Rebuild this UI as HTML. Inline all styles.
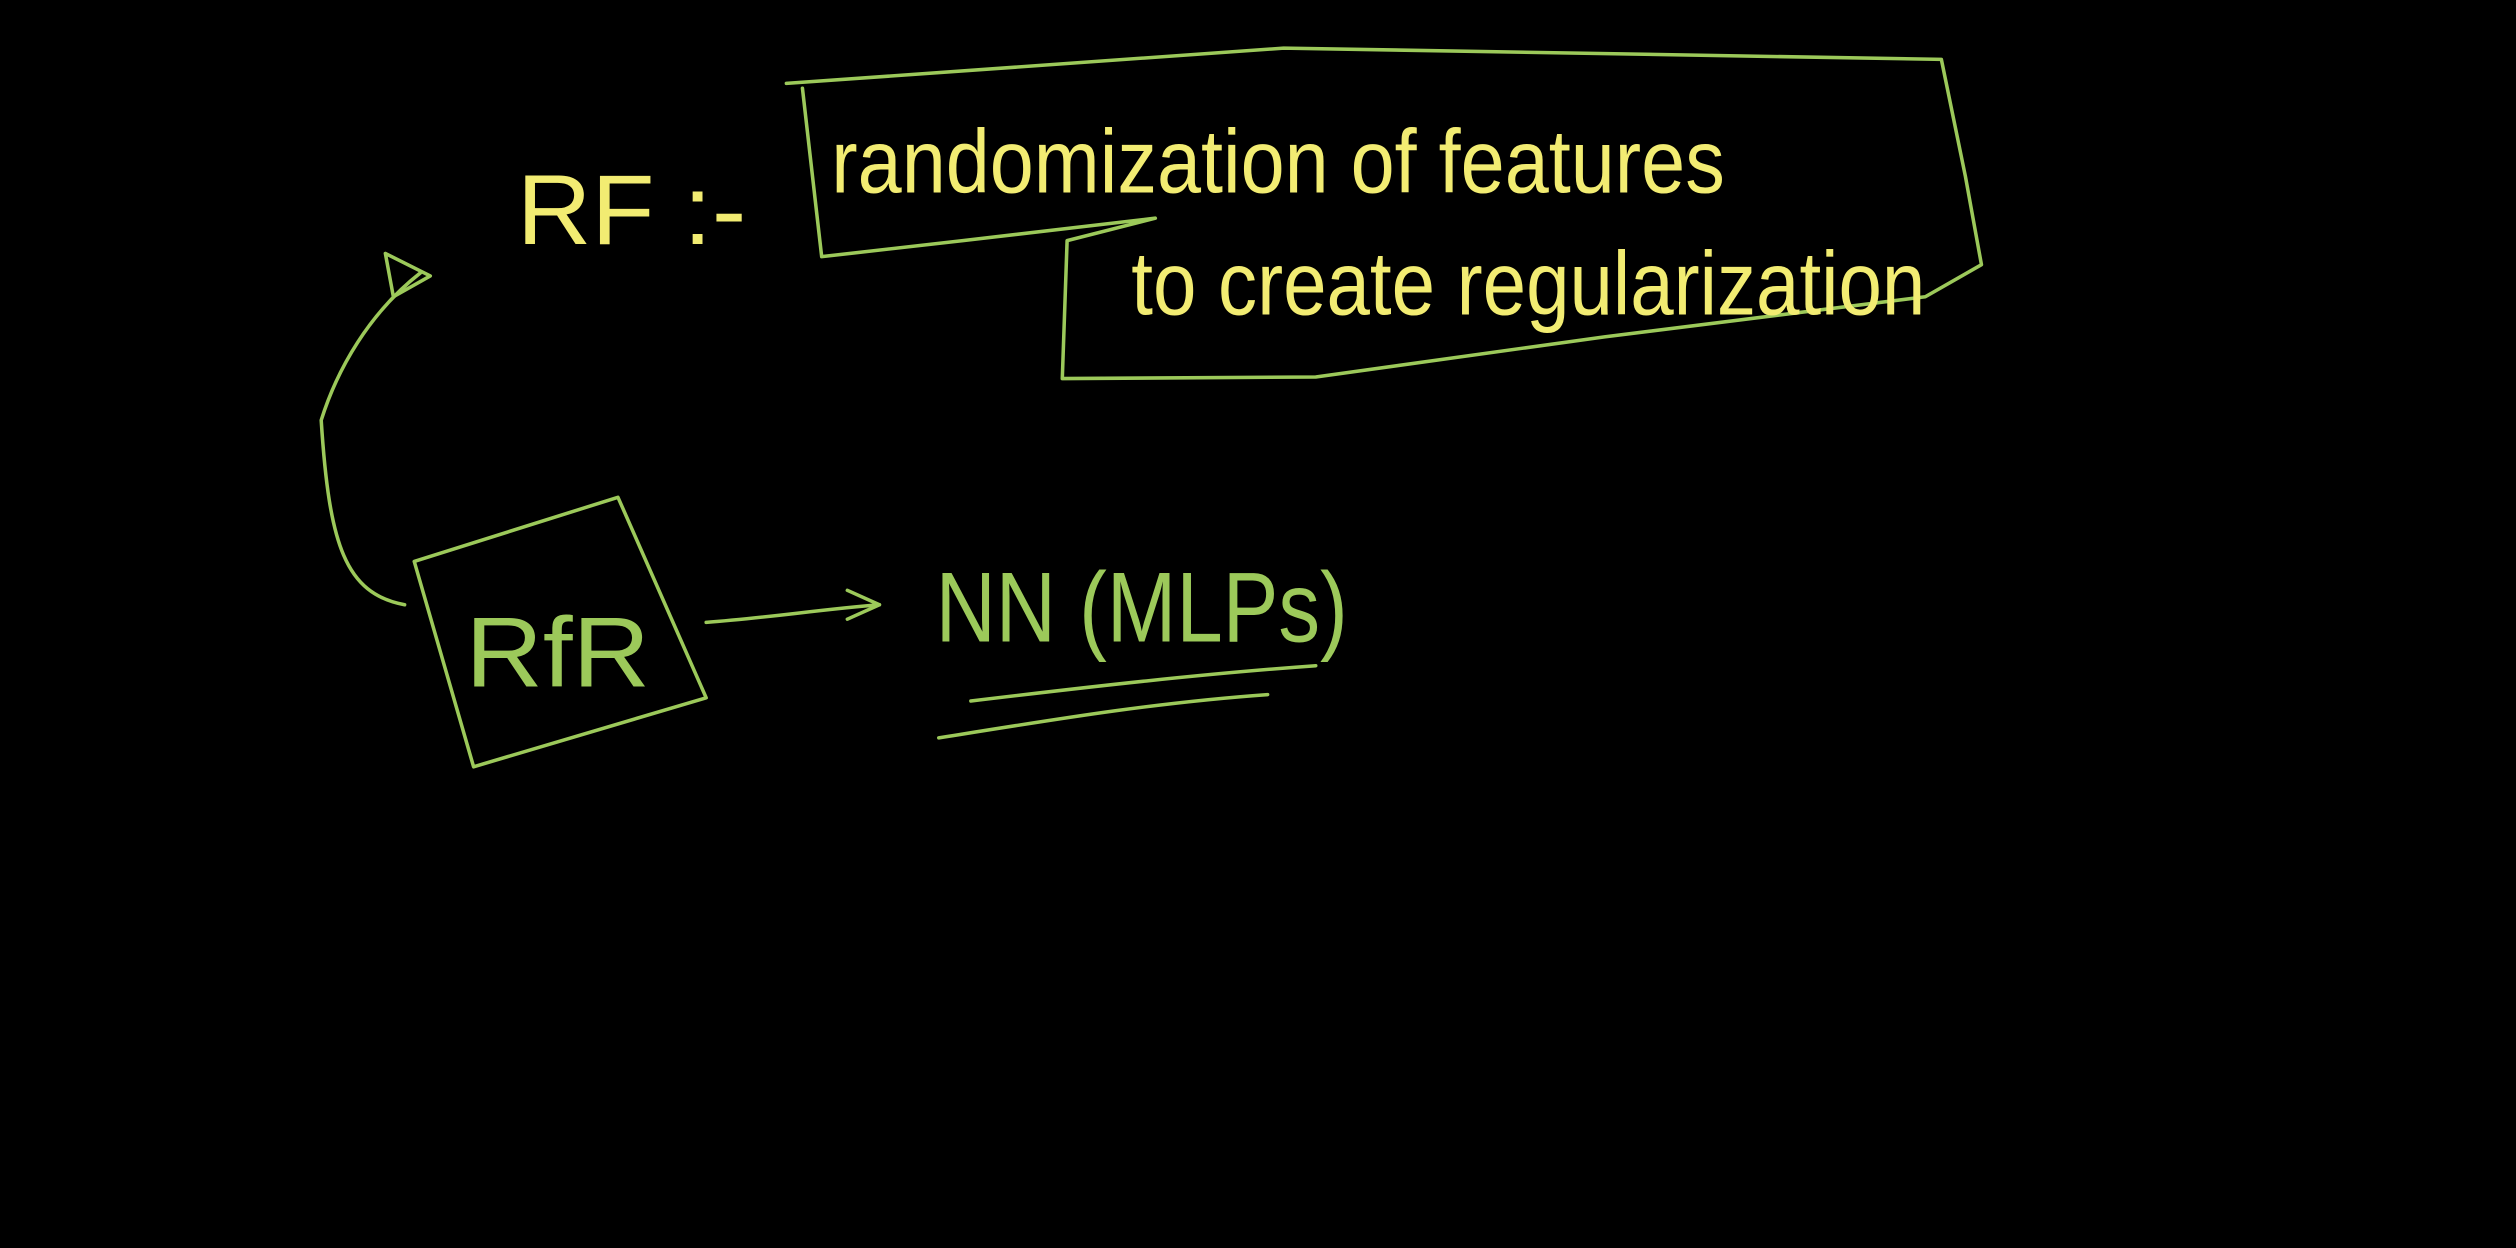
<!DOCTYPE html>
<html><head><meta charset="utf-8"><style>
html,body{margin:0;padding:0;background:#000;width:2516px;height:1248px;overflow:hidden}
svg{display:block}
</style></head><body>
<svg width="2516" height="1248" viewBox="0 0 1568 778" xmlns="http://www.w3.org/2000/svg">
<rect width="1568" height="778" fill="#000"/>
<g fill="none" stroke="#9cc95a" stroke-width="2.2" stroke-linecap="round" stroke-linejoin="round">
<path d="M490,52 L800,30 L1210,37 L1225,110 L1235,165 L1200,185 L1000,210 L820,235 L662,236 L665,150 L720,136 L600,150 L512,160 L500,55"/>
<path d="M252,377 C215,370 205,340 200,262 C210,230 230,195 262,170"/>
<path d="M240,158 L268,172 L245,185 Z"/>
<path d="M258,350 L385,310 L440,435 L295,478 Z"/>
<path d="M440,388 C480,385 510,380 548,377"/>
<path d="M528,368 L548,377 L528,386"/>
<path d="M605,437 C680,428 750,420 820,415"/>
<path d="M585,460 C660,448 720,438 790,433"/>
</g>
<g font-family="Liberation Sans, sans-serif" font-weight="normal">
<text x="322" y="152" font-size="62" fill="#f2ec72" textLength="143" lengthAdjust="spacingAndGlyphs">RF :-</text>
<text x="518" y="120" font-size="56" fill="#f2ec72" textLength="557" lengthAdjust="spacingAndGlyphs">randomization of features</text>
<text x="705" y="196" font-size="56" fill="#f2ec72" textLength="495" lengthAdjust="spacingAndGlyphs">to create regularization</text>
<text x="290" y="428" font-size="62" fill="#9cc95a" textLength="115" lengthAdjust="spacingAndGlyphs">RfR</text>
<text x="583" y="400" font-size="62" fill="#9cc95a" textLength="257" lengthAdjust="spacingAndGlyphs">NN (MLPs)</text>
</g>
</svg>
</body></html>
